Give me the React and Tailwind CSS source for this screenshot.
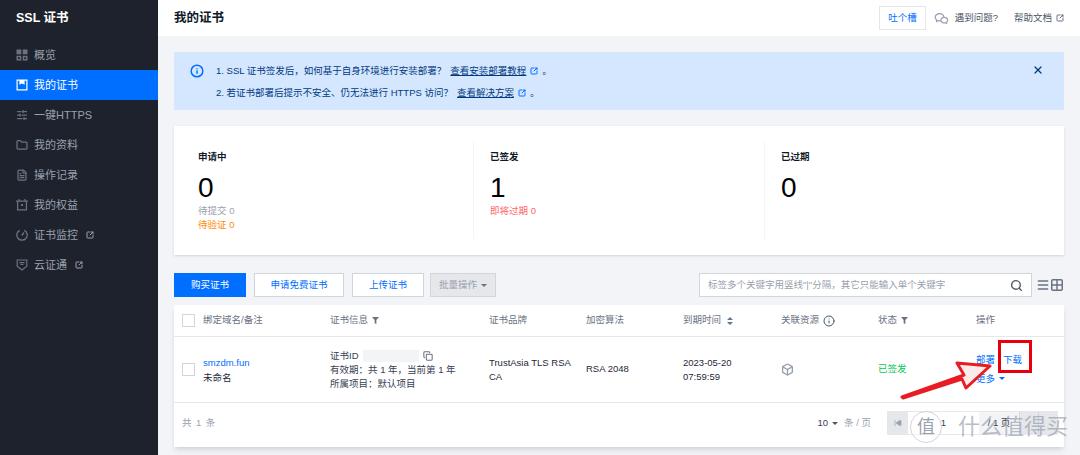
import React from 'react';
import {
  SlidersHorizontal,
  Folder,
  FileText,
  SquareArrowOutUpRight,
  Info,
  X,
  Search,
  Menu,
  Grid2x2,
  Copy,
  Box,
  SkipBack,
} from 'lucide-react';
import { RiWechatLine } from 'react-icons/ri';

const FONT = '"Liberation Sans", "Noto Sans CJK SC", sans-serif';

// sidebar glyphs that the icon packages don't have in this filled style
const GridIcon = ({ className }) => (
  <svg viewBox="0 0 12 12" width="12" height="12" fill="currentColor" className={className}>
    <rect x="0.5" y="0.5" width="4.8" height="4.8" />
    <rect x="6.7" y="0.5" width="4.8" height="4.8" />
    <path fillRule="evenodd" d="M.5 6.7h4.8v4.8H.5zM2 8.2v1.8h1.8V8.2z" />
    <path fillRule="evenodd" d="M6.7 6.7h4.8v4.8H6.7zM8.2 8.2v1.8H10V8.2z" />
  </svg>
);

const CertIcon = ({ className }) => (
  <svg viewBox="0 0 12 12" width="12" height="12" fill="currentColor" className={className}>
    <path fillRule="evenodd" d="M.5.5h11v11H.5zM1.7 1.7v8.6h8.6V1.7H8.6v4.1L6 4.4 3.4 5.8V1.7z" />
  </svg>
);

const CalendarIcon = ({ className }) => (
  <svg viewBox="0 0 12 12" width="12" height="12" fill="currentColor" className={className}>
    <path fillRule="evenodd" d="M2.5 0h1.2v1.6h4.6V0h1.2v1.6H12v1.2h-1v8.7H1V2.800H0V1.600h2.500zM2.200 2.800v7.500h7.600V2.800zM5 5h2v2H5z" />
  </svg>
);

const GaugeIcon = ({ className }) => (
  <svg viewBox="0 0 12 12" width="12" height="12" fill="none" stroke="currentColor" strokeWidth="1.3" className={className}>
    <path d="M3.800 1.300a5.200 5.200 0 1 0 4.400 0" />
    <path d="M8 3.500 5.800 6.500" />
  </svg>
);

const ShieldIcon = ({ className }) => (
  <svg viewBox="0 0 12 12" width="12" height="12" fill="none" stroke="currentColor" strokeWidth="1.2" className={className}>
    <path d="M1.200 1h9.600v6.200L6 11 1.200 7.200z" />
    <path d="M3.500 3.600h5M4.500 5.500h3" />
  </svg>
);

const Funnel = () => (
  <svg viewBox="0 0 8 8" width="7" height="7" fill="currentColor" className="text-gray-500">
    <path d="M0 0h8L5 3.500V8L3 7V3.500z" />
  </svg>
);

const SortIcon = () => (
  <svg viewBox="0 0 6 8" width="6" height="8" fill="currentColor" className="text-gray-500">
    <path d="M3 0 6 3H0zM0 5h6L3 8z" />
  </svg>
);

const NAV = [
  { label: '概览', icon: GridIcon },
  { label: '我的证书', icon: CertIcon, active: true },
  { label: '一键HTTPS', icon: SlidersHorizontal },
  { label: '我的资料', icon: Folder },
  { label: '操作记录', icon: FileText },
  { label: '我的权益', icon: CalendarIcon },
  { label: '证书监控', icon: GaugeIcon, external: true },
  { label: '云证通', icon: ShieldIcon, external: true },
];

const Caret = ({ className }) => (
  <span className={`inline-block h-0 w-0 border-x-[3px] border-t-[3px] border-x-transparent ${className}`} />
);

const Sidebar = () => (
  <aside className="flex w-[158px] shrink-0 flex-col bg-[#1e222d]">
    <div className="flex h-9 items-center px-4 text-[12.5px] font-bold text-white">SSL 证书</div>
    <nav className="mt-1 flex flex-col">
      {NAV.map(({ label, icon: Icon, active, external }) => (
        <div
          key={label}
          className={`flex h-[30px] items-center gap-1.5 px-4 text-[11px] ${active ? 'bg-[#006eff] text-white' : 'text-gray-400'}`}
        >
          <Icon size={12} strokeWidth={2.5} className={active ? 'text-white' : 'text-gray-500'} />
          <span>{label}</span>
          {external && <SquareArrowOutUpRight size={8} strokeWidth={3} className="ml-0.5 text-gray-400" />}
        </div>
      ))}
    </nav>
  </aside>
);

const Header = () => (
  <header className="flex h-9 shrink-0 items-center justify-between bg-white pl-4 pr-4">
    <h1 className="text-[12.5px] font-bold text-gray-900">我的证书</h1>
    <div className="flex items-center text-gray-600">
      <button className="border border-gray-200 px-2 py-1 text-[#006eff]">吐个槽</button>
      <RiWechatLine size={15} className="ml-2 text-gray-400" />
      <span className="ml-1.5">遇到问题?</span>
      <span className="ml-4">帮助文档</span>
      <SquareArrowOutUpRight size={8} strokeWidth={3} className="ml-1 text-gray-500" />
    </div>
  </header>
);

const Notice = () => (
  <div className="flex h-[58px] shrink-0 items-start bg-[#d5e7ff] pl-4 pr-5 pt-2 leading-[22px] text-[#003b80]">
    <Info size={14} strokeWidth={2.5} className="mt-1 text-[#006eff]" />
    <div className="ml-3 flex flex-1 flex-col">
      <p className="flex items-center">
        1. SSL 证书签发后，如何基于自身环境进行安装部署？
        <span className="ml-1 underline">查看安装部署教程</span>
        <SquareArrowOutUpRight size={8} strokeWidth={3} className="ml-1 text-[#006eff]" />
        <span className="ml-1">。</span>
      </p>
      <p className="flex items-center">
        2. 若证书部署后提示不安全、仍无法进行 HTTPS 访问？
        <span className="ml-1 underline">查看解决方案</span>
        <SquareArrowOutUpRight size={8} strokeWidth={3} className="ml-1 text-[#006eff]" />
        <span className="ml-1">。</span>
      </p>
    </div>
    <X size={12} strokeWidth={2.5} className="mt-1" />
  </div>
);

const Stat = ({ title, value, children, className }) => (
  <div className={`flex-1 ${className}`}>
    <div className="mt-2 font-bold text-gray-900">{title}</div>
    <div className="mt-2 text-[28px] leading-8 text-black">{value}</div>
    <div className="flex flex-col leading-[14px]">{children}</div>
  </div>
);

const Stats = () => (
  <section className="mt-4 grid h-[129px] shrink-0 grid-cols-[300px_291px_1fr] bg-white py-4 shadow-sm">
    <Stat title="申请中" value="0" className="border-r border-gray-100 pl-6">
      <span className="text-gray-400">待提交 0</span>
      <span className="text-orange-400">待验证 0</span>
    </Stat>
    <Stat title="已签发" value="1" className="border-r border-gray-100 pl-4">
      <span className="text-red-400">即将过期 0</span>
    </Stat>
    <Stat title="已过期" value="0" className="pl-4" />
  </section>
);

const Toolbar = () => (
  <div className="mt-[18px] flex h-6 shrink-0 items-center gap-2">
    <button className="h-6 w-[72px] bg-[#006eff] text-white">购买证书</button>
    <button className="h-6 w-[90px] border border-gray-300 bg-white text-[#006eff]">申请免费证书</button>
    <button className="h-6 w-[72px] border border-gray-300 bg-white text-[#006eff]">上传证书</button>
    <button className="-ml-0.5 flex h-6 w-[66px] items-center justify-center gap-1 border border-gray-300 bg-gray-200 text-gray-400">
      批量操作 <Caret className="border-t-gray-500" />
    </button>
    <div className="ml-auto flex h-6 w-[333px] items-center justify-between border border-gray-300 bg-white pl-2 pr-2 text-gray-400">
      <span>标签多个关键字用竖线"|"分隔，其它只能输入单个关键字</span>
      <Search size={13} strokeWidth={2.5} className="text-gray-600" />
    </div>
    <div className="-ml-1 flex items-center text-gray-500">
      <Menu size={14} strokeWidth={2.5} />
      <Grid2x2 size={14} strokeWidth={2.5} />
    </div>
  </div>
);

const COLS = 'grid grid-cols-[156px_159px_97px_97px_98px_97px_98px_1fr] items-center';

const Table = () => (
  <section className="mt-2 flex h-[142px] shrink-0 flex-col bg-white shadow-md">
    <div className={`${COLS} h-8 border-b border-gray-200 text-gray-500`}>
      <div className="flex items-center gap-2 pl-2">
        <span className="size-[13px] border border-gray-300" />
        绑定域名/备注
      </div>
      <div className="flex items-center gap-1">证书信息 <Funnel /></div>
      <div>证书品牌</div>
      <div>加密算法</div>
      <div className="flex items-center gap-1.5">到期时间 <SortIcon /></div>
      <div className="flex items-center gap-1">关联资源 <Info size={12} strokeWidth={2} className="text-gray-600" /></div>
      <div className="flex items-center gap-1">状态 <Funnel /></div>
      <div>操作</div>
    </div>
    <div className={`${COLS} h-[66px] border-b border-gray-200 text-gray-800`}>
      <div className="flex items-center gap-2 pl-2">
        <span className="size-[13px] border border-gray-300" />
        <div className="leading-[15px]">
          <div className="text-[#006eff]">smzdm.fun</div>
          <div>未命名</div>
        </div>
      </div>
      <div className="leading-[14px] text-gray-700">
        <div className="flex items-center gap-1">
          证书ID
          <span className="h-3 w-14 bg-gray-100" />
          <Copy size={10} strokeWidth={2.5} className="text-gray-500" />
        </div>
        <div>有效期：共 1 年，当前第 1 年</div>
        <div>所属项目：默认项目</div>
      </div>
      <div className="pr-2 leading-[14px]">TrustAsia TLS RSA CA</div>
      <div>RSA 2048</div>
      <div className="leading-[14px]">2023-05-20<br />07:59:59</div>
      <div><Box size={13} strokeWidth={2.5} className="text-gray-400" /></div>
      <div className="text-green-500">已签发</div>
      <div className="flex flex-col gap-1 text-[#006eff]">
        <div className="flex gap-2"><span>部署</span><span>下载</span></div>
        <div className="flex items-center gap-1">更多 <Caret className="border-t-[#006eff]" /></div>
      </div>
    </div>
    <div className="flex flex-1 items-center justify-between pb-1 pl-2 pr-1.5 text-gray-400">
      <span className="tracking-widest">共 1 条</span>
      <div className="flex items-center">
        <span className="text-gray-700">10</span>
        <Caret className="ml-1 border-t-gray-600" />
        <span className="ml-1.5">条 / 页</span>
        <div className="ml-4 flex h-6 w-[171px] items-center border border-gray-200 bg-gray-200 text-gray-700">
          <span className="flex h-full w-5 items-center justify-center">
            <SkipBack size={8} className="fill-gray-400 text-gray-400" />
          </span>
          <span className="flex h-full w-[71px] items-center justify-center bg-white">1</span>
          <span className="flex h-full w-10 items-center justify-center bg-gray-100">/ 1 页</span>
          <span className="h-full flex-1 border-l border-gray-300" />
          <span className="h-full flex-1 border-l border-gray-300" />
        </div>
      </div>
    </div>
  </section>
);

// red annotation and watermark that were added on top of the screenshot
const Annotation = () => (
  <div className="pointer-events-none absolute inset-0">
    <div className="absolute left-[998px] top-[340px] h-[33px] w-[34px] border-[3px] border-red-600" />
    <svg className="absolute left-[900px] top-[355px]" width="100" height="50" viewBox="0 0 100 50">
      <path
        d="M2 42 L64 20 L57 8 L90 11 L66 33 L62 24 L3 43 Z"
        fill="#fdeaea"
        stroke="#e81c24"
        strokeWidth="3"
        strokeLinejoin="round"
      />
    </svg>
    <div className="absolute left-[910px] top-[411px] flex items-center gap-4">
      <span className="flex size-8 items-center justify-center rounded-full border border-gray-300 bg-white/60 text-lg text-gray-400">值</span>
      <span className="text-[22px] leading-8 text-gray-400/70">什么值得买</span>
    </div>
  </div>
);

export default function App() {
  return (
    <div className="relative flex h-screen overflow-hidden bg-[#f2f4f8] text-[9.5px]" style={{ fontFamily: FONT }}>
      <Sidebar />
      <main className="flex min-w-0 flex-1 flex-col">
        <Header />
        <div className="flex flex-1 flex-col px-4 pt-4">
          <Notice />
          <Stats />
          <Toolbar />
          <Table />
        </div>
      </main>
      <Annotation />
    </div>
  );
}
